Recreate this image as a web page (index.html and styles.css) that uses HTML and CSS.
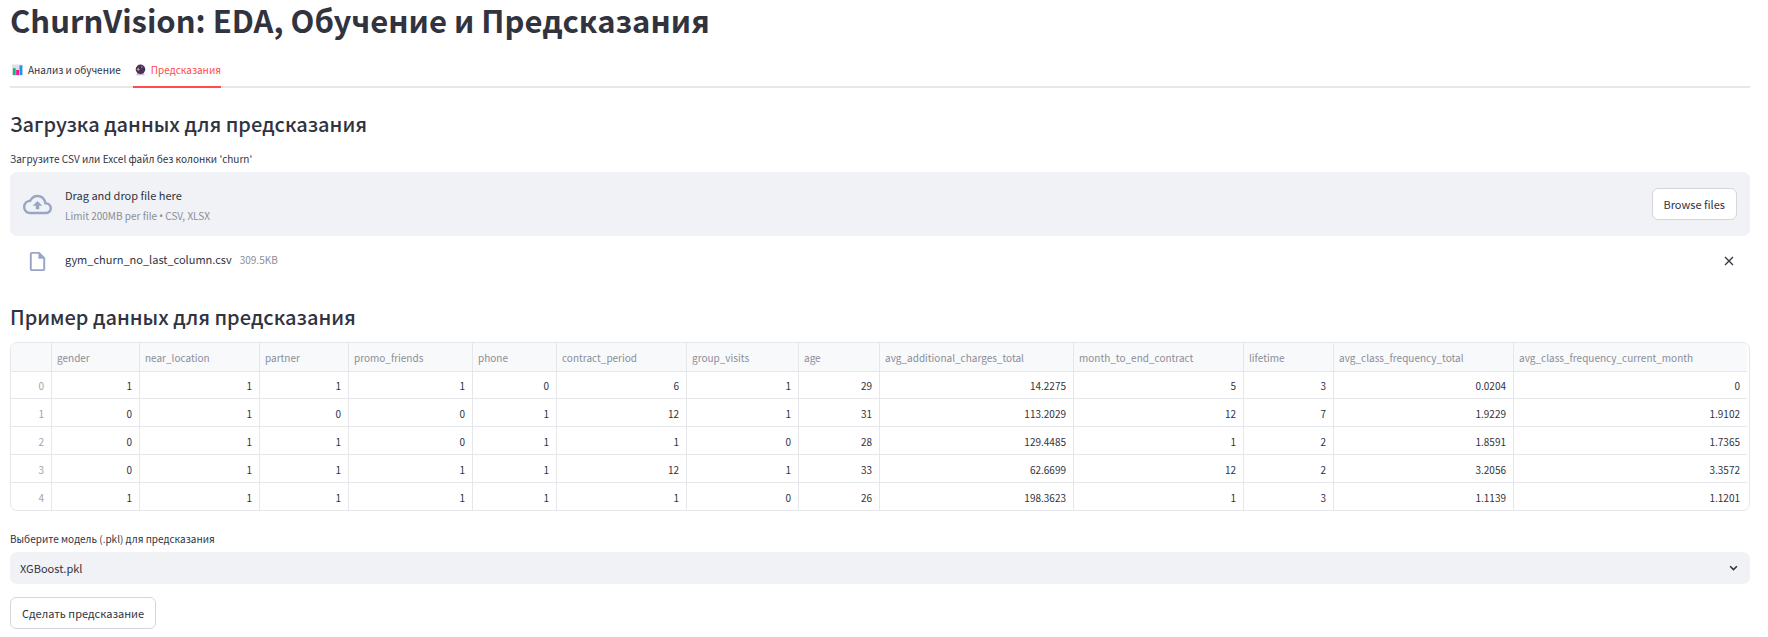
FILE: index.html
```html
<!DOCTYPE html>
<html lang="ru">
<head>
<meta charset="utf-8">
<meta name="viewport" content="width=device-width, initial-scale=1">
<title>ChurnVision</title>
<link rel="stylesheet" href="styles.css">
</head>
<body>
<main class="page">
  <h1 class="title">ChurnVision: EDA, Обучение и Предсказания</h1>

  <div class="tabs" role="tablist">
    <button class="tab" type="button" role="tab" aria-selected="false">
      <svg class="tab-icon" viewBox="0 0 12 12" aria-hidden="true">
        <rect width="12" height="12" rx="1" fill="#e3dcea"/>
        <rect x="1" y="4" width="3" height="7.5" fill="#14b86c"/>
        <rect x="4.6" y="6" width="3" height="5.5" fill="#f0148c"/>
        <rect x="8.2" y="1" width="3" height="10.5" fill="#109cea"/>
      </svg>
      <span>Анализ и обучение</span>
    </button>
    <button class="tab tab-active" type="button" role="tab" aria-selected="true">
      <svg class="tab-icon" viewBox="0 0 12 12" aria-hidden="true">
        <path d="M2.5 9h7l1.2 2.8H1.3z" fill="#c9bfce"/>
        <circle cx="6" cy="5.2" r="5.2" fill="#493061"/>
        <path d="M3.5 3.2l.6 1.4 1.4.6-1.4.6-.6 1.5-.6-1.5-1.4-.6 1.4-.6z" fill="#f4c430"/>
        <circle cx="7.5" cy="2.6" r=".8" fill="#c79ae0"/>
      </svg>
      <span>Предсказания</span>
    </button>
  </div>

  <section class="upload">
    <h2 class="heading">Загрузка данных для предсказания</h2>
    <label class="label" for="browse">Загрузите CSV или Excel файл без колонки 'churn'</label>
    <div class="dropzone">
      <span class="icon-slot">
        <svg class="icon-cloud" viewBox="0 0 24 24" aria-hidden="true"><path fill="currentColor" d="M19.35 10.04C18.67 6.59 15.64 4 12 4 9.11 4 6.6 5.64 5.35 8.04 2.34 8.36 0 10.91 0 14c0 3.31 2.69 6 6 6h13c2.76 0 5-2.24 5-5 0-2.64-2.05-4.78-4.65-4.96zM19 18H6c-2.21 0-4-1.79-4-4 0-2.05 1.53-3.76 3.56-3.97l1.07-.11.5-.95C8.08 7.14 9.94 6 12 6c2.62 0 4.88 1.86 5.39 4.43l.3 1.5 1.53.11c1.56.1 2.78 1.41 2.78 2.96 0 1.65-1.35 3-3 3zM8 13h2.55v3h2.9v-3H16l-4-4z"/></svg>
      </span>
      <div class="drop-text">
        <span>Drag and drop file here</span>
        <span class="muted">Limit 200MB per file <span class="bullet">•</span> CSV, XLSX</span>
      </div>
      <button class="button" id="browse" type="button">Browse files</button>
    </div>
    <div class="file">
      <span class="icon-slot">
        <svg class="icon-file" viewBox="0 0 24 24" aria-hidden="true"><path fill="currentColor" d="M14 2H6c-1.1 0-1.99.9-1.99 2L4 20c0 1.1.89 2 1.99 2H18c1.1 0 2-.9 2-2V8l-6-6zM6 20V4h7v5h5v11H6z"/></svg>
      </span>
      <div class="file-text">
        <span>gym_churn_no_last_column.csv</span>
        <span class="muted">309.5KB</span>
      </div>
      <button class="close" type="button" aria-label="Удалить файл">
        <svg class="icon-close" viewBox="0 0 10 10" aria-hidden="true"><path d="M1 1l8 8M9 1l-8 8" stroke="currentColor" stroke-width="1.3" fill="none"/></svg>
      </button>
    </div>
  </section>

  <section class="sample">
    <h2 class="heading">Пример данных для предсказания</h2>
    <div class="frame">
      <table class="data">
        <colgroup>
          <col class="w-index"><col class="w-gender"><col class="w-near"><col class="w-partner"><col class="w-promo"><col class="w-phone"><col class="w-period"><col class="w-group"><col class="w-age"><col class="w-charges"><col class="w-end"><col class="w-life"><col class="w-freq"><col class="w-month">
        </colgroup>
        <thead>
          <tr><th></th><th>gender</th><th>near_location</th><th>partner</th><th>promo_friends</th><th>phone</th><th>contract_period</th><th>group_visits</th><th>age</th><th>avg_additional_charges_total</th><th>month_to_end_contract</th><th>lifetime</th><th>avg_class_frequency_total</th><th>avg_class_frequency_current_month</th></tr>
        </thead>
        <tbody>
          <tr><td>0</td><td>1</td><td>1</td><td>1</td><td>1</td><td>0</td><td>6</td><td>1</td><td>29</td><td>14.2275</td><td>5</td><td>3</td><td>0.0204</td><td>0</td></tr>
          <tr><td>1</td><td>0</td><td>1</td><td>0</td><td>0</td><td>1</td><td>12</td><td>1</td><td>31</td><td>113.2029</td><td>12</td><td>7</td><td>1.9229</td><td>1.9102</td></tr>
          <tr><td>2</td><td>0</td><td>1</td><td>1</td><td>0</td><td>1</td><td>1</td><td>0</td><td>28</td><td>129.4485</td><td>1</td><td>2</td><td>1.8591</td><td>1.7365</td></tr>
          <tr><td>3</td><td>0</td><td>1</td><td>1</td><td>1</td><td>1</td><td>12</td><td>1</td><td>33</td><td>62.6699</td><td>12</td><td>2</td><td>3.2056</td><td>3.3572</td></tr>
          <tr><td>4</td><td>1</td><td>1</td><td>1</td><td>1</td><td>1</td><td>1</td><td>0</td><td>26</td><td>198.3623</td><td>1</td><td>3</td><td>1.1139</td><td>1.1201</td></tr>
        </tbody>
      </table>
    </div>
  </section>

  <form class="predict">
    <label class="label" for="model">Выберите модель (.pkl) для предсказания</label>
    <div class="select-box">
      <select class="select" id="model"><option>XGBoost.pkl</option></select>
      <svg class="chevron" viewBox="0 0 8 6" aria-hidden="true"><path d="M1 1l3 3 3-3" stroke="currentColor" stroke-width="1.4" fill="none"/></svg>
    </div>
    <button class="button" type="button">Сделать предсказание</button>
  </form>
</main>
</body>
</html>
```

FILE: styles.css
```css
* { box-sizing: border-box; }

body {
  margin: 0;
  background: #fff;
  color: #31333f;
  font-family: "Noto Sans CJK SC", "Noto Sans", sans-serif;
  font-size: 11px;
  line-height: 18px;
}

button, select { font: inherit; color: inherit; }

.page { padding: 1px 18px 8px 10px; }

.title {
  margin: 0 0 16px;
  font-size: 31px;
  line-height: 38px;
  font-weight: 700;
}

.tabs {
  display: flex;
  gap: 12px;
  border-bottom: 2px solid #e6e7ea;
}

.tab {
  display: flex;
  align-items: center;
  gap: 5px;
  height: 33px;
  margin-bottom: -2px;
  padding: 0 0 2px 2px;
  border: 0;
  border-bottom: 2px solid transparent;
  background: none;
  font-size: 10px;
  cursor: pointer;
}

.tab-active { color: #ff4b4b; border-color: #ff4b4b; }
.tab-icon { width: 11px; height: 12px; }

.upload { padding-top: 23px; }

.heading {
  margin: 0 0 12px;
  font-size: 20px;
  line-height: 26px;
  font-weight: 500;
}

.label {
  display: block;
  margin-bottom: 3px;
  font-size: 10px;
  line-height: 20px;
}

.dropzone {
  display: flex;
  align-items: center;
  min-height: 64px;
  padding: 0 13px;
  border-radius: 7px;
  background: #f0f2f6;
}

.icon-slot {
  display: flex;
  justify-content: center;
  width: 29px;
  margin-right: 13px;
  color: #98a6c6;
}

.icon-cloud { width: 29px; height: 29px; }
.icon-file { width: 23px; height: 23px; }

.drop-text {
  display: flex;
  flex: 1;
  flex-direction: column;
  gap: 3px;
  padding-top: 3px;
}

.muted { color: #8b8d98; font-size: 10px; }
.bullet { font-family: "Noto Sans", sans-serif; }

.button {
  height: 32px;
  padding: 0 11px;
  border: 1px solid #d5d6da;
  border-radius: 6px;
  background: #fff;
  cursor: pointer;
}

.file {
  display: flex;
  align-items: center;
  height: 32px;
  margin-top: 9px;
  padding: 0 13px;
}

.file-text {
  display: flex;
  flex: 1;
  align-items: baseline;
  gap: 8px;
  padding-bottom: 4px;
}

.close {
  display: flex;
  padding: 3px;
  border: 0;
  background: none;
  cursor: pointer;
}

.icon-close { width: 10px; height: 10px; }

.sample { padding-top: 27px; }

.frame {
  padding-right: 4px;
  overflow: hidden;
  border: 1px solid #e6e7ea;
  border-radius: 7px;
}

.data {
  width: 100%;
  table-layout: fixed;
  border-collapse: separate;
  border-spacing: 0;
  font-size: 10px;
}

.data th, .data td {
  height: 28px;
  padding: 2px 7px 0 5px;
  border-right: 1px solid #e6e7ea;
  border-bottom: 1px solid #e6e7ea;
  font-weight: 400;
  text-align: right;
  white-space: nowrap;
}

.data th {
  height: 29px;
  background: #f8f9fb;
  color: #8b8d98;
  text-align: left;
}

.data td:first-child { color: #a3a4ac; }
.data th:last-child, .data td:last-child { border-right: 0; }
.data tbody tr:first-child td { height: 27px; }
.data tbody tr:last-child td { height: 27px; border-bottom: 0; }

.w-index { width: 41px; }
.w-gender { width: 88px; }
.w-near { width: 120px; }
.w-partner { width: 89px; }
.w-promo { width: 124px; }
.w-phone { width: 84px; }
.w-period { width: 130px; }
.w-group { width: 112px; }
.w-age { width: 81px; }
.w-charges { width: 194px; }
.w-end { width: 170px; }
.w-life { width: 90px; }
.w-freq { width: 180px; }
.w-month { width: 233px; }

.predict { padding-top: 18px; }

.select-box {
  position: relative;
  margin-bottom: 13px;
}

.select {
  display: block;
  width: 100%;
  height: 32px;
  padding: 0 10px;
  border: 0;
  border-radius: 7px;
  background: #f0f2f6;
  appearance: none;
}

.chevron {
  position: absolute;
  top: 13px;
  right: 12px;
  width: 9px;
  height: 7px;
  pointer-events: none;
}
```
